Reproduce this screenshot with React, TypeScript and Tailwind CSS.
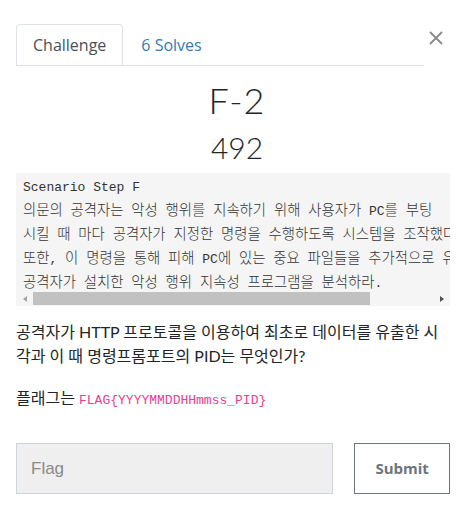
import React from "react";

const scenario = [
  "Scenario Step F",
  "의문의 공격자는 악성 행위를 지속하기 위해 사용자가 PC를 부팅",
  "시킬 때 마다 공격자가 지정한 명령을 수행하도록 시스템을 조작했다.",
  "또한, 이 명령을 통해 피해 PC에 있는 중요 파일들을 추가적으로 유출했다.",
  "공격자가 설치한 악성 행위 지속성 프로그램을 분석하라.",
];

// hangul runs get a slightly bigger face, like the bitmap fallback in the shot
const MonoLine = ({ text }: { text: string }) => (
  <>
    {text.split(/([\uac00-\ud7a3]+)/).map((part, i) =>
      /[\uac00-\ud7a3]/.test(part) ? (
        <span key={i} className="text-[14.4px] font-['Noto_Sans_CJK_KR',monospace] font-light">
          {part}
        </span>
      ) : (
        <span key={i}>{part}</span>
      )
    )}
  </>
);

const CloseIcon = () => (
  <svg width="16" height="16" viewBox="0 0 16 16" className="text-[#8a8a8a]">
    <path d="M2 2 L14 14 M14 2 L2 14" stroke="currentColor" strokeWidth="1.8" />
  </svg>
);

export default function App() {
  return (
    <div className="w-[474px] h-[529px] bg-white overflow-hidden font-['Lato','Noto_Sans_CJK_KR',sans-serif] text-[#212529]">
      <div className="pl-4 pr-[30px] pt-6">
        {/* tabs */}
        <div className="flex items-start">
          <div className="flex flex-1 border-b border-[#dee2e6]">
            <div className="h-[41px] px-4 flex items-center border border-b-0 border-[#dee2e6] rounded-t-[4px] -mb-px bg-white text-[16px] text-[#495057] font-['Open_Sans',sans-serif]">
              Challenge
            </div>
            <div className="h-[41px] px-[18px] flex items-center text-[16px] text-[#337ab7] font-['Open_Sans',sans-serif]">
              6 Solves
            </div>
          </div>
          <button className="ml-[4px] mt-[6px] w-[16px] h-[16px] flex items-center justify-center">
            <CloseIcon />
          </button>
        </div>
      </div>

      <div className="px-4">
        <h2 className="text-center text-[36px] leading-none mt-[16px] tracking-[1px] font-light">F-2</h2>
        <h3 className="text-center text-[30px] leading-none mt-[14px] font-light">492</h3>

        {/* description */}
        <div className="mt-[11px] w-[434px] bg-[#f5f5f5]">
          <div className="overflow-hidden pl-[7px] pt-[4px] pb-[5px] h-[118px]">
            {scenario.map((line, i) => (
              <div
                key={i}
                className="whitespace-nowrap text-[13px] leading-[21px] text-[#333] font-['Liberation_Mono','Noto_Sans_CJK_KR',monospace]"
              >
                <MonoLine text={line} />
              </div>
            ))}
          </div>
          {/* scrollbar */}
          <div className="h-[15px] flex items-center">
            <div className="w-[17px] flex justify-center">
              <span className="block w-0 h-0 border-y-[3px] border-y-transparent border-r-[4px] border-r-[#a3a3a3]" />
            </div>
            <div className="h-[13px] w-[337px] bg-[#c1c1c1]" />
            <div className="flex-1" />
            <div className="w-[17px] flex justify-center">
              <span className="block w-0 h-0 border-y-[3px] border-y-transparent border-l-[4px] border-l-[#505050]" />
            </div>
          </div>
        </div>

        <p className="mt-[14px] text-[16px] leading-[24px] text-[#212529] pr-2">
          공격자가 HTTP 프로토콜을 이용하여 최초로 데이터를 유출한 시각과 이 때 명령프롬포트의 PID는 무엇인가?
        </p>
        <p className="mt-[18px] text-[16px] leading-[24px]">
          플래그는{" "}
          <code className="text-[13px] text-[#e83e8c] font-['Liberation_Mono',monospace]">
            FLAG{"{"}YYYYMMDDHHmmss_PID{"}"}
          </code>
        </p>

        {/* submit row */}
        <div className="mt-[30px] flex gap-[21px] w-[434px]">
          <input
            className="w-[318px] h-[51px] bg-[#efefef] border border-[#ced4da] px-[14px] text-[17px] font-['Liberation_Sans',sans-serif] placeholder:text-[#8a8a8a] outline-none"
            placeholder="Flag"
          />
          <button className="w-[96px] h-[51px] border border-[#6c757d] text-[#6c757d] font-bold text-[15px] font-['Open_Sans',sans-serif]">
            Submit
          </button>
        </div>
      </div>
    </div>
  );
}
